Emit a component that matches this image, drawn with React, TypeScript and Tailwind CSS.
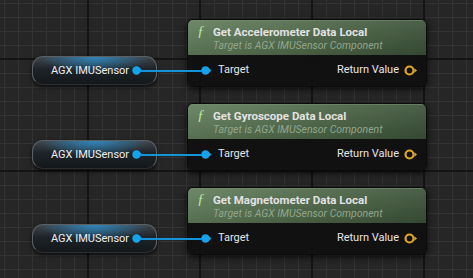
import React from "react";

const font = "font-['Roboto','Liberation_Sans',sans-serif]";

const DataPin = () => (
  <svg width="11" height="9" viewBox="0 0 11 9" className="block">
    <circle cx="4.5" cy="4.5" r="4.2" fill="#12a5ef" />
    <path d="M7.5 2 L10.5 4.5 L7.5 7 Z" fill="#12a5ef" />
  </svg>
);

const ReturnPin = () => (
  <svg width="14" height="11" viewBox="0 0 14 11" className="block">
    <circle cx="5.5" cy="5.5" r="4" fill="none" stroke="#dcaa1c" strokeWidth="2.2" />
    <path d="M10.4 3.2 L13 5.5 L10.4 7.8 Z" fill="#dcaa1c" />
  </svg>
);

const VarNode = () => (
  <div className="mt-[37px] ml-[32px] flex h-[29px] w-[125px] items-center whitespace-nowrap rounded-[11px] border border-[#5b6064] border-b-[#2a2e31] bg-[#1a1f23] bg-[image:radial-gradient(ellipse_45%_60%_at_50%_0%,rgba(45,150,215,0.8),transparent),linear-gradient(to_bottom,#40464c,#1d2328_45%,#14181b)] pl-[18px] pr-[13px] shadow-[0_2px_4px_rgba(0,0,0,0.7)]">
    <span className="text-[11px] leading-none text-[#eeeeee]">AGX IMUSensor</span>
    <span className="ml-auto">
      <DataPin />
    </span>
  </div>
);

const FuncNode = ({ title }: { title: string }) => (
  <div className="flex h-[68px] w-[240px] flex-col overflow-hidden rounded-[6px] border border-[#0b0b0b] shadow-[0_2px_6px_rgba(0,0,0,0.8)]">
    <div className="flex h-[35px] flex-col justify-center border-t border-[#86a07e]/60 bg-[image:linear-gradient(to_bottom,rgba(255,255,255,0.08),rgba(0,0,0,0.12)),linear-gradient(to_right,#637e5c,#4d6647_55%,#3c5239)] pl-[9px]">
      <div className="flex items-center gap-[6px]">
        <span className="w-[10px] font-['Liberation_Serif',serif] text-[15px] italic leading-none text-[#b6e6a6]">ƒ</span>
        <span className="text-[11.5px] font-bold leading-[14px] text-[#e2e2e2]">{title}</span>
      </div>
      <div className="pl-[16px] text-[10.5px] italic leading-[13px] text-[#92a68c]">Target is AGX IMUSensor Component</div>
    </div>
    <div className="flex flex-1 items-center justify-between bg-[#101010]/95 pl-[13px] pr-[8px]">
      <div className="flex items-center gap-[6px]">
        <DataPin />
        <span className="text-[11px] text-[#e6e6e6]">Target</span>
      </div>
      <div className="flex items-center gap-[5px]">
        <span className="text-[11px] text-[#e6e6e6]">Return Value</span>
        <ReturnPin />
      </div>
    </div>
  </div>
);

const rows = ["Get Accelerometer Data Local", "Get Gyroscope Data Local", "Get Magnetometer Data Local"];

export default function App() {
  return (
    <div
      className={`${font} relative h-[278px] w-[473px] overflow-hidden bg-[#262626] bg-[image:linear-gradient(to_right,#141414_2px,transparent_2px),linear-gradient(to_bottom,#141414_2px,transparent_2px),linear-gradient(to_right,#333333_1px,transparent_1px),linear-gradient(to_bottom,#333333_1px,transparent_1px)] bg-[size:112px_112px,112px_112px,14px_14px,14px_14px] bg-[position:87px_0,0_58px,4px_0,0_3px]`}
    >
      <div className="flex flex-col gap-[16px] pt-[19px]">
        {rows.map((t) => (
          <div key={t} className="relative flex items-start">
            <VarNode />
            <div className="w-[30px]" />
            <FuncNode title={t} />
            <div className="absolute left-[140px] top-[51px] h-[1.5px] w-[62px] bg-[#1493d6]" />
          </div>
        ))}
      </div>
    </div>
  );
}
